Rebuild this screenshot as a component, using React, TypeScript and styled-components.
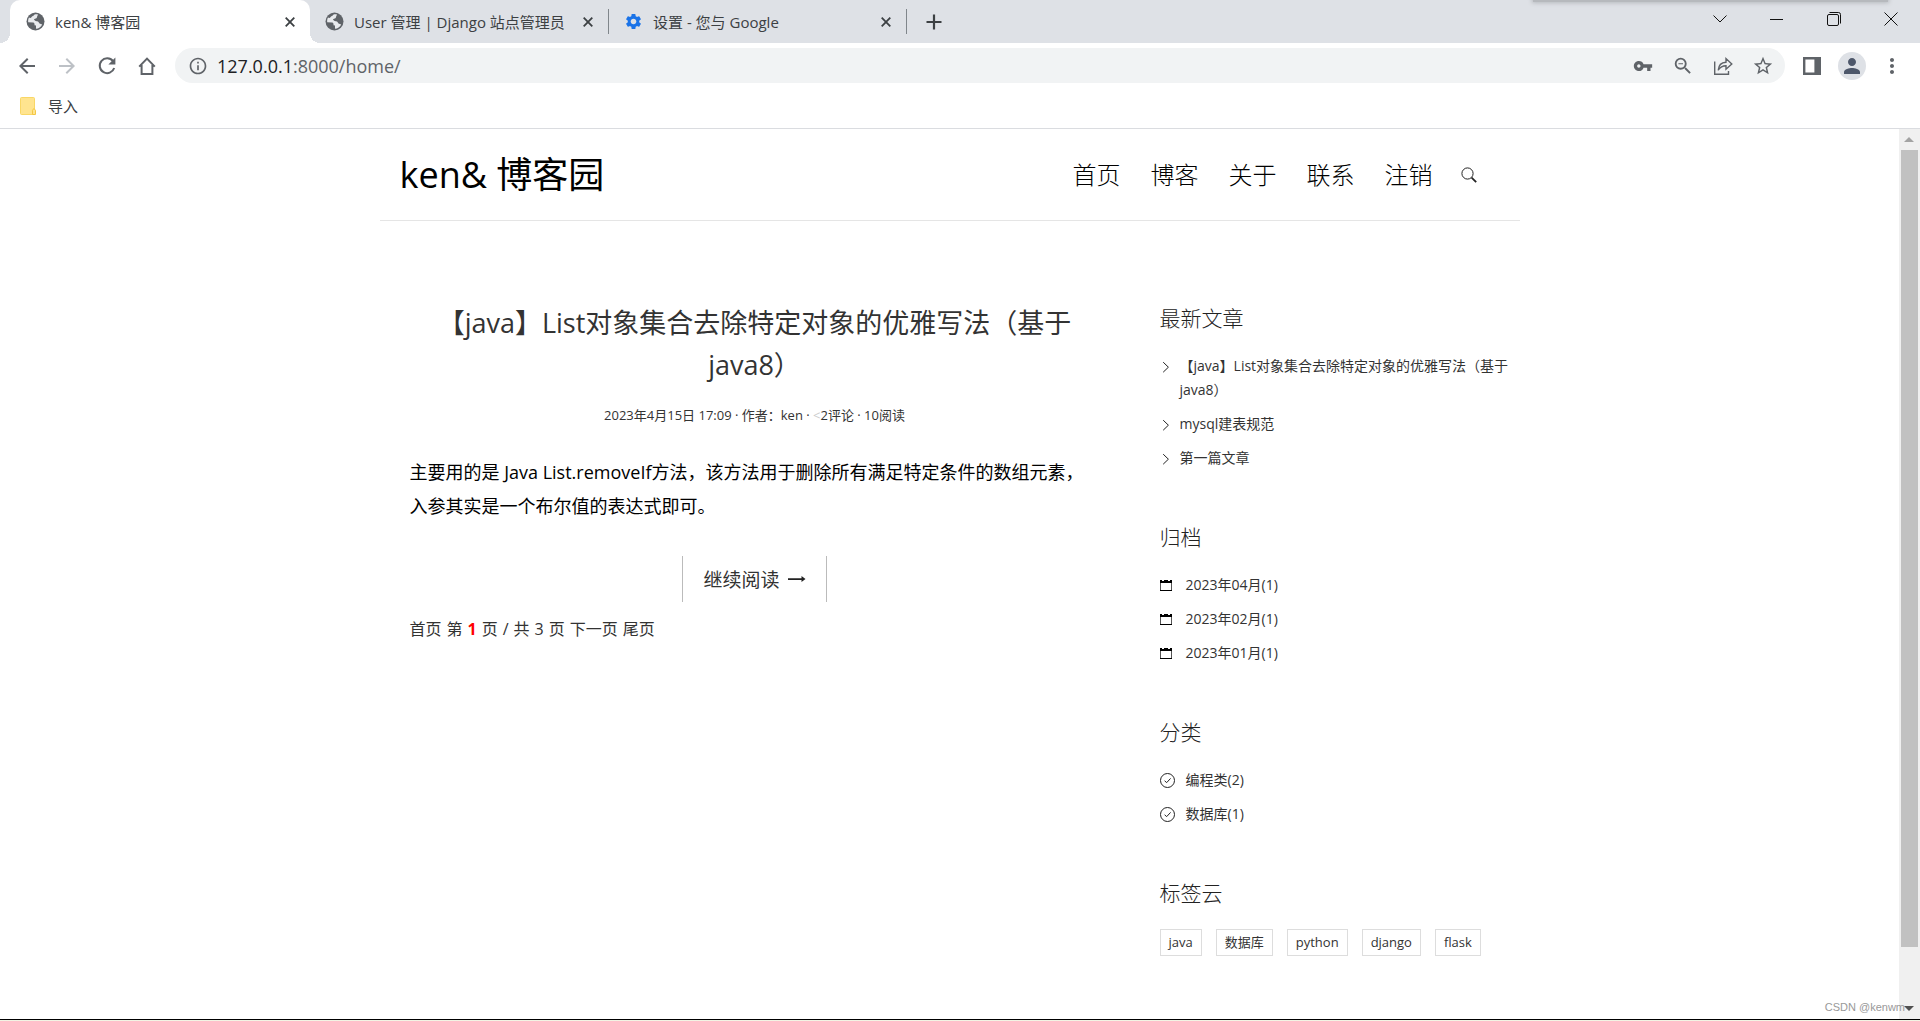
import React from 'react';
import styled, { createGlobalStyle } from 'styled-components';
import {
  MdArrowBack,
  MdArrowForward,
  MdMoreVert,
  MdOutlineInfo,
  MdPerson,
  MdSettings,
  MdStarBorder,
  MdVpnKey,
  MdZoomOut,
} from 'react-icons/md';

const GlobalStyle = createGlobalStyle`
  * { box-sizing: border-box; }
  body {
    margin: 0;
    background: #fff;
    color: #333;
    font-family: "Open Sans", "Noto Sans CJK SC", sans-serif;
    text-spacing-trim: space-all;
  }
  button, input { font: inherit; color: inherit; }
  button { border: 0; padding: 0; background: none; cursor: pointer; }
  a { color: inherit; text-decoration: none; }
  h1, h2, p, ul { margin: 0; padding: 0; font-weight: 400; }
  ul { list-style: none; }
  svg { display: block; flex: none; }
`;

const Window = styled.div`
  position: relative;
  display: flex;
  flex-direction: column;
  min-height: 100vh;
  overflow: hidden;
`;

/* ---------- browser frame ---------- */

const TabStrip = styled.div`
  position: relative;
  display: flex;
  align-items: stretch;
  height: 43px;
  padding: 0 1px 0 10px;
  background: #dee1e6;
`;

const WindowShadow = styled.div`
  position: absolute;
  top: -4px;
  right: 32px;
  width: 355px;
  height: 6px;
  background: #b6b9bd;
  box-shadow: 0 0 4px 1px #b6b9bd;
`;

const Tab = styled.div<{ $active?: boolean; $width: number }>`
  position: relative;
  display: flex;
  align-items: center;
  width: ${(p) => p.$width}px;
  padding: 0 12px 0 ${(p) => (p.$active ? 16 : 15)}px;
  background: ${(p) => (p.$active ? '#fff' : 'transparent')};
  border-radius: 10px 10px 0 0;
  color: #3c4043;

  &::before,
  &::after {
    content: '';
    display: ${(p) => (p.$active ? 'block' : 'none')};
    position: absolute;
    bottom: 0;
    width: 10px;
    height: 10px;
  }
  &::before {
    left: -10px;
    background: radial-gradient(circle at 0 0, transparent 10px, #fff 10px);
  }
  &::after {
    right: -10px;
    background: radial-gradient(circle at 100% 0, transparent 10px, #fff 10px);
  }
`;

const TabTitle = styled.button`
  display: flex;
  flex: 1;
  align-items: center;
  gap: 10px;
  min-width: 0;
  font-size: 15px;
  line-height: 24px;
  white-space: nowrap;
`;

const CloseButton = styled.button`
  display: grid;
  place-items: center;
  width: 16px;
  height: 20px;
`;

const TabDivider = styled.div`
  align-self: center;
  width: 1px;
  height: 25px;
  background: #80868b;
`;

const NewTab = styled.button`
  padding: 0 19px;
  color: #3c4043;
`;

const WindowControls = styled.div`
  display: flex;
  align-items: center;
  height: 38px;
  margin-left: auto;
`;

const WindowButton = styled.button`
  display: grid;
  place-items: center;
  width: 57px;
  height: 38px;
  color: #111;
`;

const Toolbar = styled.div`
  display: flex;
  align-items: center;
  height: 45px;
  padding: 0 16px 0 15px;
  color: #5f6368;
`;

const ToolGroup = styled.div<{ $gap: number }>`
  display: flex;
  align-items: center;
  gap: ${(p) => p.$gap}px;
`;

const ToolButton = styled.button<{ $muted?: boolean }>`
  display: grid;
  place-items: center;
  width: 24px;
  height: 28px;
  color: ${(p) => (p.$muted ? '#bdc1c6' : '#5f6368')};
`;

const AddressBar = styled.form`
  display: flex;
  flex: 1;
  align-items: center;
  height: 35px;
  margin: 0 15px 0 16px;
  padding: 0 10px 0 13px;
  border-radius: 18px;
  background: #f1f3f4;
  font-size: 18px;
  line-height: 28px;
`;

const Host = styled.label`
  padding-left: 9px;
  color: #202124;
`;

const AddressInput = styled.input`
  flex: 1;
  min-width: 0;
  padding: 0;
  border: 0;
  outline: 0;
  background: none;
  color: #5f6368;
`;

const Avatar = styled.button`
  display: grid;
  place-items: center;
  width: 28px;
  height: 28px;
  border-radius: 50%;
  background: #dee1e6;
  color: #4e586b;
`;

const Bookmarks = styled.div`
  height: 41px;
  padding: 6px 20px;
  border-bottom: 1px solid #dadce0;
`;

const Bookmark = styled.button`
  display: flex;
  align-items: center;
  gap: 12px;
  color: #3c4043;
  font-size: 15px;
  line-height: 24px;
`;

const Viewport = styled.div`
  display: grid;
  flex: 1;
  grid-template-columns: minmax(0, 1fr) 21px;
`;

const ScrollTrack = styled.div`
  display: grid;
  grid-template-rows: 21px minmax(0, 1fr) 21px;
  justify-items: center;
  padding-right: 1px;
  background: #f0f0f0;
`;

const ScrollThumb = styled.div`
  width: 17px;
  height: 94%;
  background: #c1c1c1;
`;

const ScrollArrow = styled.div<{ $down?: boolean }>`
  align-self: center;
  border: 5px solid transparent;
  border-top: ${(p) => (p.$down ? '5px solid #505050' : '0')};
  border-bottom: ${(p) => (p.$down ? '0' : '5px solid #a3a3a3')};
`;

const BottomEdge = styled.div`
  height: 2px;
  border-top: 1px solid #000;
  background: #f2f4e4;
`;

const Watermark = styled.div`
  position: absolute;
  right: 15px;
  bottom: 6px;
  color: #999;
  font-family: "Liberation Sans", sans-serif;
  font-size: 11px;
  line-height: 16px;
`;

/* ---------- blog page ---------- */

const Page = styled.div`
  width: 100%;
  max-width: 1140px;
  margin: 0 auto;
`;

const SiteHeader = styled.header`
  display: flex;
  align-items: center;
  justify-content: space-between;
  padding: 22px 43px 21px 20px;
  border-bottom: 1px solid #e5e5e5;
`;

const SiteName = styled.h1`
  color: #000;
  font-size: 36px;
  line-height: 48px;
`;

const SiteNav = styled.nav`
  display: flex;
  align-items: center;
  gap: 28px;
`;

const Menu = styled.div`
  display: flex;
  gap: 30px;
  color: #000;
  font-size: 24px;
  font-weight: 300;
  line-height: 36px;
`;

const Columns = styled.div`
  display: grid;
  grid-template-columns: minmax(0, 1fr) 360px;
  gap: 30px;
  padding: 81px 0 60px;
`;

const Article = styled.main`
  padding: 0 30px;
`;

const ArticleTitle = styled.h2`
  font-size: 27px;
  line-height: 42px;
  text-align: center;
`;

const Meta = styled.p`
  margin-top: 17px;
  font-size: 13px;
  line-height: 24px;
  text-align: center;
`;

const Faint = styled.span`
  color: #ccc;
`;

const Summary = styled.p`
  margin-top: 28px;
  color: #000;
  font-size: 18px;
  line-height: 34px;
`;

const ReadMore = styled.a`
  display: flex;
  align-items: center;
  gap: 8px;
  width: fit-content;
  height: 46px;
  margin: 33px auto 15px;
  padding: 0 20px;
  border: solid #bbb;
  border-width: 0 1px;
  font-size: 19px;
`;

const Pager = styled.nav`
  display: flex;
  gap: 5px;
  font-size: 16px;
  line-height: 24px;
`;

const CurrentPage = styled.strong`
  color: #f00;
`;

const Sidebar = styled.aside`
  display: flex;
  flex-direction: column;
  gap: 45px;
  padding-top: 4px;
`;

const WidgetTitle = styled.h2`
  margin-bottom: 24px;
  color: #222;
  font-size: 21px;
  font-weight: 300;
  line-height: 24px;
`;

const WidgetItem = styled.li<{ $wide?: boolean }>`
  display: grid;
  grid-template-columns: ${(p) => (p.$wide ? 26 : 20)}px minmax(0, 1fr);
  margin-bottom: 10px;
  font-size: 14px;
  line-height: 24px;
`;

const ItemIcon = styled.span`
  display: flex;
  align-items: center;
  height: 24px;
  color: #222;
`;

const Tags = styled.div`
  display: flex;
  flex-wrap: wrap;
  gap: 14px;
`;

const Tag = styled.a`
  padding: 0 8px;
  border: 1px solid #ddd;
  font-size: 13px;
  line-height: 25px;
`;

/* ---------- drawings ---------- */

const Globe = () => (
  <svg width="19" height="19" viewBox="0 0 19 19">
    <circle cx="9.5" cy="9.5" r="9" fill="#5f6368" />
    <path
      d="M3 5.6 C2.2 7 2 8.6 2.2 10.2 L7 10.4 C8.6 10.5 8.6 12 8.5 13.2 L10 13.4 V16.8 C12.6 16.6 15 15 16.2 12.4 L13.5 11.6 C12.8 9.6 11.6 9.2 9.6 9 L8 7.8 C8.4 6.4 9.6 6.6 10.4 6.2 C11.4 5.6 10.8 4.4 11.6 3.6 L12 2.4 C9.6 1.8 8.4 2.4 8 3 C7.6 4.2 6 4 5.6 5 C5 6.2 4 6 3 5.6Z"
      fill="#e8eaed"
    />
  </svg>
);

const Cross = () => (
  <svg width="10" height="10" viewBox="0 0 10 10" fill="none" stroke="#3c4043" strokeWidth="1.8">
    <path d="M.7.7 9.300 9.300M9.300.7.7 9.300" />
  </svg>
);

const Plus = () => (
  <svg width="16" height="16" viewBox="0 0 16 16" fill="none" stroke="#3c4043" strokeWidth="2.2">
    <path d="M8 .5v15M.5 8h15" />
  </svg>
);

const Reload = () => (
  <svg width="20" height="20" viewBox="0 0 20 20" fill="none" stroke="currentColor" strokeWidth="2">
    <path d="M16 5.2A7.4 7.4 0 1 0 17.2 12" />
    <path d="M18.4 1.4v7h-7z" fill="currentColor" stroke="none" />
  </svg>
);

const Home = () => (
  <svg width="20" height="20" viewBox="0 0 20 20" fill="none" stroke="currentColor" strokeWidth="2">
    <path d="M2.2 10.6 10 2.6l7.8 8M4.6 9v9h10.8V9" />
  </svg>
);

const Share = () => (
  <svg width="20" height="20" viewBox="0 0 20 20" fill="none" stroke="currentColor" strokeWidth="1.4">
    <path d="M1.7 5.5V18.3H15.5V15" />
    <path d="M5.2 14.2C5.6 9.2 8.6 6.4 13 6.2V2.6L18.8 8 13 13.2V9.8C9.6 9.8 7.2 11 5.2 14.2Z" />
  </svg>
);

const SidePanel = () => (
  <svg width="18" height="18" viewBox="0 0 18 18">
    <path d="M0 0h18v18H0zM2.4 2.4v13.2h9V2.4z" fill="currentColor" fillRule="evenodd" />
  </svg>
);

const Folder = () => (
  <svg width="16" height="18" viewBox="0 0 16 18">
    <rect x=".5" y=".5" width="14" height="17" rx="1" fill="#ffe48f" stroke="#f9d766" />
    <path d="M12.5 17.5v-4.2l1.4-1.8 1.6 1.8v4.2z" fill="#ffe48f" stroke="#f4c744" />
  </svg>
);

const Search = () => (
  <svg width="16" height="16" viewBox="0 0 16 16" fill="none" stroke="#222">
    <circle cx="6.5" cy="6.5" r="5.6" />
    <path d="M10.6 10.6 15.2 15.2" strokeWidth="1.8" />
  </svg>
);

const LongArrow = () => (
  <svg width="18" height="8" viewBox="0 0 18 8" fill="#222">
    <path d="M0 3.200h13.500V1L17.500 4l-4 3V4.900H0z" />
  </svg>
);

const Chevron = () => (
  <svg width="12" height="14" viewBox="0 0 12 14" fill="none" stroke="currentColor">
    <path d="M3.2 3.2 8.4 8.200 3.2 13.2" />
  </svg>
);

const Calendar = () => (
  <svg width="12" height="12" viewBox="0 0 12 12">
    <path d="M.5 2v9.500h11V2" fill="none" stroke="#555" />
    <path d="M0 1h2v1h2V1h4v1h2V1h2v3H0z" fill="#000" />
    <path d="M0 11h12v1H0z" fill="#000" />
  </svg>
);

const CheckCircle = () => (
  <svg width="15" height="16" viewBox="0 0 15 16" fill="none" stroke="currentColor">
    <circle cx="7.5" cy="8.500" r="7" />
    <path d="M4.600 8.800 6.700 10.600l3.900-4.200" />
  </svg>
);

const recentPosts = ['【java】List对象集合去除特定对象的优雅写法（基于java8）', 'mysql建表规范', '第一篇文章'];
const archives = ['2023年04月(1)', '2023年02月(1)', '2023年01月(1)'];
const categories = ['编程类(2)', '数据库(1)'];
const tags = ['java', '数据库', 'python', 'django', 'flask'];
const menu = ['首页', '博客', '关于', '联系', '注销'];

type WidgetListProps = { title: string; items: string[]; icon: React.ReactNode; wide?: boolean };

const WidgetList = ({ title, items, icon, wide }: WidgetListProps) => (
  <section>
    <WidgetTitle>{title}</WidgetTitle>
    <ul>
      {items.map((item) => (
        <WidgetItem key={item} $wide={wide}>
          <ItemIcon>{icon}</ItemIcon>
          <a href="#">{item}</a>
        </WidgetItem>
      ))}
    </ul>
  </section>
);

type BrowserTabProps = { title: string; icon: React.ReactNode; width: number; active?: boolean };

const BrowserTab = ({ title, icon, width, active }: BrowserTabProps) => (
  <Tab $width={width} $active={active}>
    <TabTitle>
      {icon}
      {title}
    </TabTitle>
    <CloseButton aria-label="关闭">
      <Cross />
    </CloseButton>
  </Tab>
);

export default function App() {
  return (
    <Window>
      <GlobalStyle />
      <TabStrip>
        <BrowserTab active width={300} title="ken& 博客园" icon={<Globe />} />
        <BrowserTab width={298} title="User 管理 | Django 站点管理员" icon={<Globe />} />
        <TabDivider />
        <BrowserTab width={297} title="设置 - 您与 Google" icon={<MdSettings size={19} color="#1a73e8" />} />
        <TabDivider />
        <NewTab aria-label="新标签页">
          <Plus />
        </NewTab>
        <WindowControls>
          <WindowButton aria-label="搜索标签页">
            <svg width="14" height="8" viewBox="0 0 14 8" fill="none" stroke="currentColor">
              <path d="M.5.5 7 7 13.500.5" />
            </svg>
          </WindowButton>
          <WindowButton aria-label="最小化">
            <svg width="13" height="1" viewBox="0 0 13 1">
              <path d="M0 0h13v1H0z" fill="currentColor" />
            </svg>
          </WindowButton>
          <WindowButton aria-label="还原">
            <svg width="14" height="14" viewBox="0 0 14 14" fill="none" stroke="currentColor">
              <rect x=".5" y="2.500" width="11" height="11" rx="1.500" />
              <path d="M2.500.5H11.500Q13.500.5 13.500 2.500V11.500" />
            </svg>
          </WindowButton>
          <WindowButton aria-label="关闭窗口">
            <svg width="14" height="14" viewBox="0 0 14 14" fill="none" stroke="currentColor">
              <path d="M.5.5l13 13M13.500.5l-13 13" />
            </svg>
          </WindowButton>
        </WindowControls>
        <WindowShadow />
      </TabStrip>

      <Toolbar>
        <ToolGroup $gap={16}>
          <ToolButton aria-label="后退">
            <MdArrowBack size={24} />
          </ToolButton>
          <ToolButton aria-label="前进" $muted>
            <MdArrowForward size={24} />
          </ToolButton>
          <ToolButton aria-label="刷新">
            <Reload />
          </ToolButton>
          <ToolButton aria-label="主页">
            <Home />
          </ToolButton>
        </ToolGroup>
        <AddressBar onSubmit={(e) => e.preventDefault()}>
          <MdOutlineInfo size={20} />
          <Host htmlFor="address">127.0.0.1</Host>
          <AddressInput id="address" defaultValue=":8000/home/" />
          <ToolGroup $gap={16}>
            <ToolButton type="button" aria-label="密码">
              <MdVpnKey size={20} />
            </ToolButton>
            <ToolButton type="button" aria-label="缩放">
              <MdZoomOut size={22} />
            </ToolButton>
            <ToolButton type="button" aria-label="分享">
              <Share />
            </ToolButton>
            <ToolButton type="button" aria-label="收藏">
              <MdStarBorder size={22} />
            </ToolButton>
          </ToolGroup>
        </AddressBar>
        <ToolGroup $gap={14}>
          <ToolButton aria-label="侧边栏">
            <SidePanel />
          </ToolButton>
          <Avatar aria-label="用户">
            <MdPerson size={24} />
          </Avatar>
          <ToolButton aria-label="菜单">
            <MdMoreVert size={24} />
          </ToolButton>
        </ToolGroup>
      </Toolbar>

      <Bookmarks>
        <Bookmark>
          <Folder />
          导入
        </Bookmark>
      </Bookmarks>

      <Viewport>
        <Page>
          <SiteHeader>
            <SiteName>ken& 博客园</SiteName>
            <SiteNav>
              <Menu>
                {menu.map((label) => (
                  <a href="#" key={label}>
                    {label}
                  </a>
                ))}
              </Menu>
              <button aria-label="搜索">
                <Search />
              </button>
            </SiteNav>
          </SiteHeader>

          <Columns>
            <Article>
              <ArticleTitle>
                <a href="#">【java】List对象集合去除特定对象的优雅写法（基于java8）</a>
              </ArticleTitle>
              <Meta>
                2023年4月15日 17:09 · 作者：ken · <Faint>&lt;</Faint>2评论 · 10阅读
              </Meta>
              <Summary>
                主要用的是 Java List.removeIf方法，该方法用于删除所有满足特定条件的数组元素，入参其实是一个布尔值的表达式即可。
              </Summary>
              <ReadMore href="#">
                继续阅读
                <LongArrow />
              </ReadMore>
              <Pager>
                <a href="#">首页</a>
                <span>第</span>
                <CurrentPage>1</CurrentPage>
                <span>页</span>
                <span>/</span>
                <span>共</span>
                <span>3</span>
                <span>页</span>
                <a href="#">下一页</a>
                <a href="#">尾页</a>
              </Pager>
            </Article>

            <Sidebar>
              <WidgetList title="最新文章" items={recentPosts} icon={<Chevron />} />
              <WidgetList title="归档" items={archives} icon={<Calendar />} wide />
              <WidgetList title="分类" items={categories} icon={<CheckCircle />} wide />
              <section>
                <WidgetTitle>标签云</WidgetTitle>
                <Tags>
                  {tags.map((tag) => (
                    <Tag href="#" key={tag}>
                      {tag}
                    </Tag>
                  ))}
                </Tags>
              </section>
            </Sidebar>
          </Columns>
        </Page>
        <ScrollTrack>
          <ScrollArrow />
          <ScrollThumb />
          <ScrollArrow $down />
        </ScrollTrack>
      </Viewport>
      <BottomEdge />
      <Watermark>CSDN @kenwm</Watermark>
    </Window>
  );
}
